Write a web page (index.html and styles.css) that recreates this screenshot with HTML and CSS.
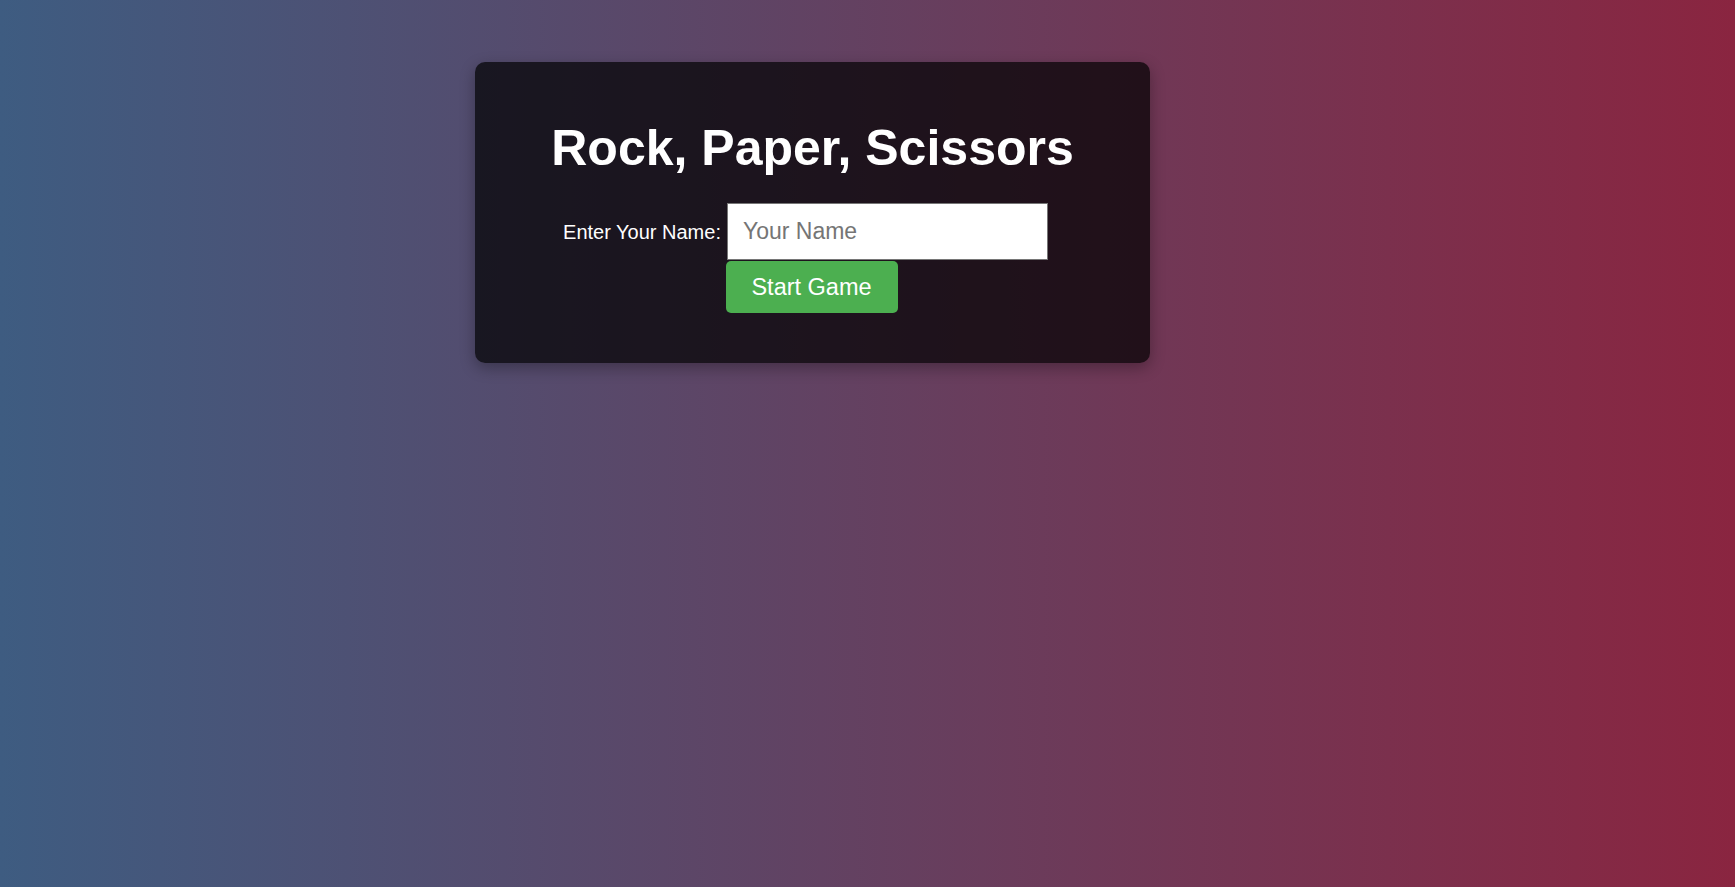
FILE: index.html
```html
<!DOCTYPE html>
<html lang="en">
<head>
<meta charset="utf-8">
<title>Rock, Paper, Scissors</title>
<link rel="stylesheet" href="styles.css">
</head>
<body>
<main class="card">
  <h1 class="title">Rock, Paper, Scissors</h1>
  <form class="start-form">
    <div class="name-row">
      <label class="name-label" for="name">Enter Your Name:</label>
      <input class="name-input" id="name" type="text" placeholder="Your Name">
    </div>
    <button class="start-btn" type="button">Start Game</button>
  </form>
</main>
</body>
</html>
```

FILE: styles.css
```css
html, body {
  height: 100%;
}
body {
  margin: 0;
  box-sizing: border-box;
  min-height: 100vh;
  background: linear-gradient(to right, #3e5c81, #8a2540);
  font-family: "Liberation Sans", Arial, sans-serif;
  color: #fff;
  display: flex;
  justify-content: center;
  align-items: flex-start;
  padding: 62px 110px 0 0;
}
.card {
  width: 675px;
  box-sizing: border-box;
  padding: 40px 40px 50px;
  background: rgba(0, 0, 0, 0.7);
  border-radius: 10px;
  box-shadow: 0 5px 15px rgba(0, 0, 0, 0.3);
  text-align: center;
}
.title {
  margin: 18px 0 0;
  font-size: 50px;
  line-height: 56px;
  font-weight: bold;
}
.start-form {
  margin-top: 27px;
  display: flex;
  flex-direction: column;
  align-items: center;
  gap: 0;
}
.name-row {
  display: flex;
  align-items: center;
  gap: 6px;
  padding-right: 14px;
}
.name-label {
  font-size: 20px;
  padding-top: 2px;
}
.name-input {
  width: 321px;
  height: 57px;
  box-sizing: border-box;
  margin: 0;
  padding: 0 15px;
  border: 1px solid #767676;
  border-radius: 0;
  background: #fff;
  font-family: "Liberation Sans", Arial, sans-serif;
  font-size: 23px;
  color: #000;
  outline: none;
}
.name-input::placeholder {
  color: #757575;
}
.start-btn {
  width: 172px;
  height: 52px;
  margin: 1px 2px 0 0;
  padding: 0;
  border: none;
  border-radius: 5px;
  background: #4caf50;
  color: #fff;
  font-family: "Liberation Sans", Arial, sans-serif;
  font-size: 23.5px;
  cursor: pointer;
}
```
